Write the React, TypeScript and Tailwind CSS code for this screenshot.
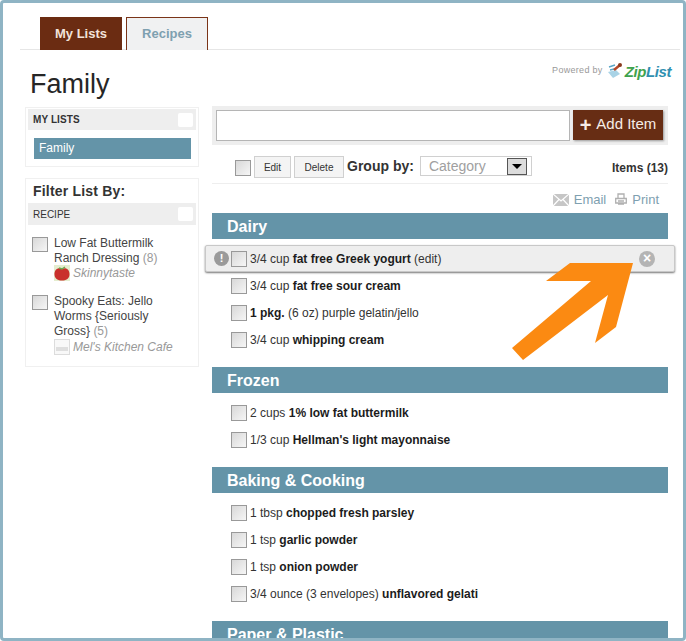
const groups = [
  {
    name: "Dairy",
    items: [
      { pre: "3/4 cup ", bold: "fat free Greek yogurt", post: " (edit)", active: true },
      { pre: "3/4 cup ", bold: "fat free sour cream" },
      { pre: "", bold: "1 pkg.", post: " (6 oz) purple gelatin/jello" },
      { pre: "3/4 cup ", bold: "whipping cream" },
    ],
  },
  {
    name: "Frozen",
    items: [
      { pre: "2 cups ", bold: "1% low fat buttermilk" },
      { pre: "1/3 cup ", bold: "Hellman's light mayonnaise" },
    ],
  },
  {
    name: "Baking & Cooking",
    items: [
      { pre: "1 tbsp ", bold: "chopped fresh parsley" },
      { pre: "1 tsp ", bold: "garlic powder" },
      { pre: "1 tsp ", bold: "onion powder" },
      { pre: "3/4 ounce (3 envelopes) ", bold: "unflavored gelati" },
    ],
  },
];

function Check({ className = "h-4" }: { className?: string }) {
  return (
    <span
      className={`block w-4 shrink-0 border border-[#999] bg-gradient-to-br from-[#d8d8d8] to-[#f6f6f6] ${className}`}
    />
  );
}

function PanelHeader({ title, bold, className = "h-[21px]" }: { title: string; bold?: boolean; className?: string }) {
  return (
    <div className={`mx-[2px] bg-[#eeeeee] flex items-center justify-between pl-[5px] pr-[3px] ${className}`}>
      <span className={`text-[10px] text-[#333] ${bold ? "font-bold tracking-[0.1px]" : ""}`}>{title}</span>
      <span className="w-[15px] h-[14px] bg-white rounded-[2px]" />
    </div>
  );
}

function Row({ item }: { item: { pre: string; bold: string; post?: string; active?: boolean } }) {
  return (
    <div
      className={
        item.active
          ? "relative h-[27px] -mx-[7px] pl-[25px] flex items-center gap-[3px] bg-[#eeeeee] border border-[#c8c8c8] rounded-[2px] shadow-[0_1px_2px_#777]"
          : "h-[27px] pl-[19px] flex items-center gap-[3px]"
      }
    >
      {item.active && (
        <span className="absolute left-[8px] w-[15px] h-[15px] rounded-full bg-[#9a9a9a] text-white text-[11px] font-bold leading-[15px] text-center">
          !
        </span>
      )}
      <Check />
      <span className="text-xs text-[#333] whitespace-nowrap">
        {item.pre}
        <b className="text-[#1c1c1c]">{item.bold}</b>
        {item.post}
      </span>
      {item.active && (
        <span className="absolute right-[19px] w-4 h-4 rounded-full bg-[#b4b4b4] text-white text-[14px] font-bold leading-[15px] text-center">
          ×
        </span>
      )}
    </div>
  );
}

export default function App() {
  return (
    <div className="relative h-[641px] w-[686px] overflow-hidden bg-white border-[3px] border-[#8fb4c4] rounded-[4px] font-['Liberation_Sans',Arial,sans-serif]">
      {/* tabs */}
      <div className="mt-[14px] mx-[17px] w-[660px] h-[33px] flex items-end gap-[4px] pl-[20px] border-b border-[#e6e6e6]">
        <div className="w-[82px] h-[33px] -mb-[1px] bg-[#6b2c12] text-[#f3e3da] text-[13px] font-bold flex items-center justify-center">
          My Lists
        </div>
        <div className="w-[82px] h-[33px] -mb-[1px] bg-[#f0f1f2] border border-b-0 border-[#7a3418] text-[#7ea0b0] text-[13px] font-bold flex items-center justify-center">
          Recipes
        </div>
      </div>

      <div className="flex justify-between items-start pl-[27px] pr-[12px] h-[58px]">
        <h1 className="text-[27px] leading-[32px] mt-[18px] text-[#262626]">Family</h1>
        <div className="flex items-center gap-[4px] mt-[12px]">
          <span className="text-[9px] tracking-[0.3px] text-[#999]">Powered by</span>
          <svg width="17" height="18" viewBox="0 0 17 18">
            <path d="M1 10 L9 8 L13 12 L6 16 Z" fill="#a9d3e6" />
            <path d="M2 5 L8 3 M3 8 L7 7" stroke="#5aa6c8" strokeWidth="1.5" />
            <path d="M7 8 L13 3" stroke="#b5482a" strokeWidth="2.5" />
            <circle cx="13" cy="3" r="2" fill="#8a3a1e" />
          </svg>
          <span className="text-[15px] tracking-[-0.4px] leading-none font-bold italic text-[#3fa34d] -ml-[3px]">
            Zip<span className="text-[#2f8fb0]">List</span>
          </span>
        </div>
      </div>

      <div className="flex pl-[22px] w-[665px] gap-[13px]">
        {/* sidebar */}
        <aside className="w-[174px] shrink-0 flex flex-col gap-[11px] mt-[-1px]">
          <div className="h-[60px] border border-[#f0f0f0] pt-[1px]">
            <PanelHeader title="MY LISTS" bold />
            <div className="mt-[8px] ml-[8px] mr-[7px] h-[21px] bg-[#6494a8] text-white text-xs leading-[21px] pl-[5px]">
              Family
            </div>
          </div>
          <div className="h-[189px] border border-[#f0f0f0]">
            <div className="h-[24px] pl-[7px] pt-[3px] text-sm font-bold text-[#333] leading-[18px] tracking-[0.2px]">
              Filter List By:
            </div>
            <PanelHeader title="RECIPE" className="h-[22px]" />
            <div className="flex gap-[6px] pl-[6px] pt-[11px]">
              <Check className="h-[15px] mt-[1px]" />
              <div className="text-xs leading-[15px] text-[#444]">
                Low Fat Buttermilk
                <br />
                Ranch Dressing <span className="text-[#999]">(8)</span>
                <div className="flex items-center gap-[3px] -mt-[1px] italic text-[#999]">
                  <svg width="16" height="16" viewBox="0 0 16 16">
                    <rect x="0" y="0" width="16" height="16" fill="#e4edcf" />
                    <path d="M8 4 C12 2 16 5 15.5 10 C15 14 12 15.5 8 15.5 C4 15.5 1 14 0.5 10 C0 5 4 2 8 4 Z" fill="#c9302c" />
                    <path d="M5 3 L8 4 L11 2" fill="none" stroke="#6aa84f" strokeWidth="1.5" />
                  </svg>
                  Skinnytaste
                </div>
              </div>
            </div>
            <div className="flex gap-[6px] pl-[6px] pt-[13px]">
              <Check className="h-[15px] mt-[1px]" />
              <div className="text-xs leading-[15px] text-[#444]">
                Spooky Eats: Jello
                <br />
                Worms {"{Seriously"}
                <br />
                Gross{"}"} <span className="text-[#999]">(5)</span>
                <div className="flex items-center gap-[3px] italic text-[#999]">
                  <svg width="16" height="16" viewBox="0 0 16 16">
                    <rect x="0.5" y="0.5" width="15" height="15" fill="#f8f8f8" stroke="#dcdcdc" />
                    <path d="M2 9 H14 M2 11 H14" stroke="#c4c4c4" strokeWidth="1" />
                  </svg>
                  Mel's Kitchen Cafe
                </div>
              </div>
            </div>
          </div>
        </aside>

        {/* main */}
        <main className="w-[456px] shrink-0 -mt-[2px]">
          <div className="h-[39px] bg-[#eeeeee] flex items-center pl-[4px] gap-[3px]">
            <div className="w-[354px] h-[31px] bg-white border border-[#b5b5b5]" />
            <div className="w-[90px] h-[30px] -mt-[2px] bg-[#672d14] text-[#f6ece6] text-[15px] flex items-center justify-center gap-[5px] shadow-[1px_1px_2px_#999]">
              <span className="text-xl font-bold leading-none">+</span>
              Add Item
            </div>
          </div>

          <div className="h-[39px] pt-[11px] border-b border-[#eeeeee] flex items-start pl-[23px]">
            <Check className="h-4 mt-[4px]" />
            <button className="ml-[3px] w-[37px] h-[22px] border border-[#d0d0d0] bg-[#f4f4f4] text-[10px] text-[#333]">
              Edit
            </button>
            <button className="ml-[3px] w-[50px] h-[22px] border border-[#d0d0d0] bg-[#f4f4f4] text-[10px] text-[#333]">
              Delete
            </button>
            <span className="ml-[3px] text-sm font-bold text-[#333] leading-[20px]">Group by:</span>
            <div className="ml-[6px] w-[112px] h-[20px] border border-[#d0d0d0] flex items-center justify-between pl-[8px] pr-[4px] text-sm text-[#a0a0a0]">
              Category
              <span className="w-[20px] h-[17px] border border-[#555] bg-[#dcdcdc] flex items-center justify-center">
                <span className="w-0 h-0 border-x-[5px] border-x-transparent border-t-[5px] border-t-black" />
              </span>
            </div>
            <span className="ml-auto mt-[4px] text-xs font-bold text-[#333]">Items (13)</span>
          </div>

          <div className="h-[29px] pt-[2px] flex items-center justify-end gap-[9px] pr-[9px] text-[13px] text-[#7ea0b0]">
            <span className="flex items-center gap-[5px]">
              <svg width="16" height="12" viewBox="0 0 16 12">
                <rect width="16" height="12" fill="#c6c6c6" />
                <path d="M0 0 L8 7 L16 0 M0 12 L6 5.5 M16 12 L10 5.5" fill="none" stroke="#fff" strokeWidth="1.2" />
              </svg>
              Email
            </span>
            <span className="flex items-center gap-[5px]">
              <svg width="12" height="13" viewBox="0 0 12 13">
                <path d="M3 5 V1 H9 V5 M3 11 H9 M0.7 5.5 H11.3 V10 H0.7 Z M3 8 H9" fill="none" stroke="#b0b0b0" strokeWidth="1.3" />
              </svg>
              Print
            </span>
          </div>

          <div className="flex flex-col gap-[14px]">
            {groups.map((g) => (
              <section key={g.name}>
                <h2 className="h-[26px] mb-[6px] bg-[#6494a8] text-white text-base font-bold leading-[27px] pl-[15px]">
                  {g.name}
                </h2>
                {g.items.map((it) => (
                  <Row key={it.bold} item={it} />
                ))}
              </section>
            ))}
            <section>
              <h2 className="h-[26px] bg-[#6494a8] text-white text-base font-bold leading-[27px] pl-[15px]">
                Paper & Plastic
              </h2>
            </section>
          </div>
        </main>
      </div>

      {/* callout arrow, offset by the 3px frame */}
      <svg className="absolute -left-[3px] -top-[3px] pointer-events-none" width="686" height="641">
        <polygon
          points="570,263 633,263 616,327 595,343 608,295 523,360 512,348 591,281 546,281"
          fill="#fb8a12"
        />
      </svg>
    </div>
  );
}
